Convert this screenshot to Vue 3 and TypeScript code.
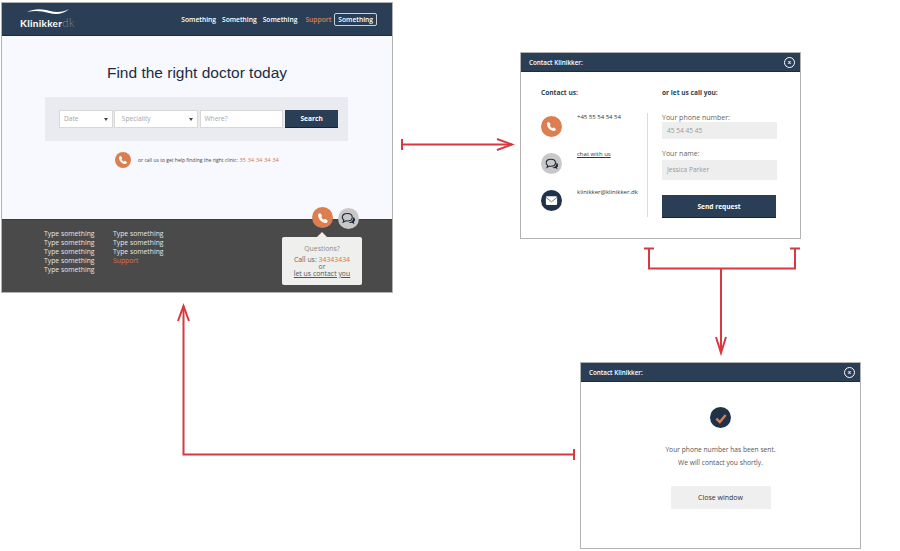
<template>
  <div class="canvas">
    <!-- main page -->
    <section class="frame page">
      <header class="topbar">
        <div class="logo">
          <svg class="swoosh" viewBox="0 0 44 7" width="44" height="7">
            <path d="M1 4 C9 0 17 1 24 3 C31 5 38 4 43 1 C38 6 30 7 23 5 C16 3 9 2 1 4 Z" fill="#fff" />
          </svg>
          <span class="logo-text">Klinikker<span class="logo-dk">dk</span></span>
        </div>
        <nav class="nav">
          <a v-for="(item, i) in navItems" :key="i">{{ item }}</a>
          <a class="nav-support">Support</a>
          <a class="nav-boxed">Something</a>
        </nav>
      </header>

      <main class="hero">
        <h1>Find the right doctor today</h1>
        <div class="search">
          <div class="field date">Date<span class="caret"></span></div>
          <div class="field speciality">Speciality<span class="caret"></span></div>
          <div class="field where">Where?</div>
          <button class="search-btn">Search</button>
        </div>
        <div class="call-line">
          <span class="circle orange small">
            <svg viewBox="0 0 24 24" width="10" height="10"><path :d="phonePath" fill="#fff" /></svg>
          </span>
          <span class="call-text">or call us to get help finding the right clinic: <em>35 34 34 34 34</em></span>
        </div>
      </main>

      <footer class="footer">
        <ul v-for="(col, i) in footerCols" :key="i" class="foot-col">
          <li v-for="(t, j) in col" :key="j" :class="{ support: t === 'Support' }">{{ t }}</li>
        </ul>
        <div class="floating">
          <span class="circle orange big">
            <svg viewBox="0 0 24 24" width="12" height="12"><path :d="phonePath" fill="#fff" /></svg>
          </span>
          <span class="circle grey big lower">
            <svg viewBox="0 0 24 24" width="15" height="15"><path :d="chatBack" fill="none" stroke="#1d2a38" stroke-width="1.8" /><path :d="chatFront" fill="#1d2a38" /></svg>
          </span>
        </div>
        <div class="tooltip">
          <div class="tip-title">Questions?</div>
          <div class="tip-call">Call us: <em>34343434</em></div>
          <div class="tip-or">or</div>
          <u class="tip-link">let us contact you</u>
        </div>
      </footer>
    </section>

    <!-- contact modal -->
    <section class="frame modal contact">
      <header class="modal-head">
        <span>Contact Klinikker:</span>
        <span class="close">x</span>
      </header>
      <div class="contact-body">
        <div class="contact-left">
          <h3>Contact us:</h3>
          <div class="contact-row">
            <span class="circle orange mid">
              <svg viewBox="0 0 24 24" width="11" height="11"><path :d="phonePath" fill="#fff" /></svg>
            </span>
            <span class="contact-text">+45 55 54 54 54</span>
          </div>
          <div class="contact-row">
            <span class="circle grey mid">
              <svg viewBox="0 0 24 24" width="14" height="14"><path :d="chatBack" fill="none" stroke="#1d2a38" stroke-width="1.8" /><path :d="chatFront" fill="#1d2a38" /></svg>
            </span>
            <u class="contact-text">chat with us</u>
          </div>
          <div class="contact-row">
            <span class="circle navy mid">
              <svg viewBox="0 0 24 24" width="15" height="15">
                <rect x="3" y="5" width="18" height="14" rx="2" fill="#fff" />
                <path d="M3 7 L12 14 L21 7" fill="none" stroke="#1f3247" stroke-width="1" />
              </svg>
            </span>
            <span class="contact-text mail">klinikker@klinikker.dk</span>
          </div>
        </div>
        <div class="contact-right">
          <h3>or let us call you:</h3>
          <div class="form">
            <label class="first">Your phone number:</label>
            <div class="input phone">45 54 45 45</div>
            <label>Your name:</label>
            <div class="input name">Jessica Parker</div>
            <button class="send-btn">Send request</button>
          </div>
        </div>
      </div>
    </section>

    <!-- confirmation modal -->
    <section class="frame modal sent">
      <header class="modal-head">
        <span>Contact Klinikker:</span>
        <span class="close">x</span>
      </header>
      <div class="sent-body">
        <span class="circle navy check">
          <svg viewBox="0 0 24 24" width="14" height="14"><path d="M4 13 L10 19 L20 7" fill="none" stroke="#dd7e50" stroke-width="4" /></svg>
        </span>
        <p>Your phone number has been sent.</p>
        <p>We will contact you shortly.</p>
        <button class="close-btn">Close window</button>
      </div>
    </section>

    <!-- flow arrows -->
    <svg class="arrows" viewBox="0 0 900 551" width="900" height="551">
      <g fill="none" stroke="#d8383f" stroke-width="2">
        <path d="M402 139 V150 M402 144.5 H512" />
        <path d="M497 139 L512 144.5 L497 150" />
        <path d="M644 248.5 H654 M649 248.5 V268.5 H795 V248.5 M790 248.5 H800" />
        <path d="M721 268.5 V353" />
        <path d="M716 337 L721 353 L726 337" />
        <path d="M574 449 V460 M574 454.5 H183.5 V306" />
        <path d="M178 321 L183.5 306 L189 321" />
      </g>
    </svg>
  </div>
</template>

<script setup lang="ts">
const navItems: string[] = ["Something", "Something", "Something"];

const footerCols: string[][] = [
  ["Type something", "Type something", "Type something", "Type something", "Type something"],
  ["Type something", "Type something", "Type something", "Support"],
];

const phonePath =
  "M6.6 2.5 L9.8 6.8 C10.3 7.5 10.1 8.3 9.5 8.9 L8.3 10 C9.3 12.3 11.6 14.7 14 15.7 L15.1 14.5 C15.7 13.9 16.5 13.7 17.2 14.2 L21.5 17.4 C21.9 18.8 20.1 21.6 18 21.8 C10 22 2 14 2.2 6 C2.4 3.9 5.2 2.1 6.6 2.5 Z";
// outlined bubble at the back, solid one lower right
const chatBack = "M10 4 C5 4 2 6.6 2 10 C2 11.8 3 13.4 4.5 14.5 L3.5 18 L7.8 15.7 C8.5 15.9 9.2 16 10 16 C15 16 18 13.4 18 10 C18 6.6 15 4 10 4 Z";
const chatFront = "M19.5 9.5 C21.5 10.7 22.5 12.3 22.5 14 C22.5 15.4 21.8 16.7 20.6 17.7 L21.5 21 L17.6 18.9 C15.8 19.3 13.8 19 12.3 18.2 C16.5 18.2 20 15 19.5 9.5 Z";
</script>

<style>
html,
body {
  margin: 0;
  background: #fff;
}
</style>

<style scoped>
.canvas {
  position: relative;
  width: 900px;
  height: 551px;
  overflow: hidden;
  background: #fff;
  font-family: "Open Sans", "Liberation Sans", sans-serif;
  color: #333;
}

.arrows {
  position: absolute;
  left: 0;
  top: 0;
  pointer-events: none;
}

.frame {
  position: absolute;
  box-sizing: border-box;
  border: 1px solid #b3b3b3;
  display: flex;
  flex-direction: column;
  background: #fff;
}

.circle {
  display: inline-flex;
  align-items: center;
  justify-content: center;
  border-radius: 50%;
  flex: none;
}
.orange { background: #dd7e50; }
.grey { background: #c8c8c8; }
.navy { background: #1f3247; }
.small { width: 16px; height: 16px; }
.mid { width: 21px; height: 21px; }
.big { width: 21px; height: 21px; }

/* main page */
.page {
  left: 1px;
  top: 2px;
  width: 392px;
  height: 291px;
}

.topbar {
  height: 33px;
  flex: none;
  box-sizing: border-box;
  background: #2a3f55;
  border-bottom: 1px solid #1c2c3f;
  display: flex;
  align-items: center;
  justify-content: space-between;
  padding: 0 15px 0 18px;
  color: #fff;
}

.logo {
  position: relative;
  width: 60px;
  padding-top: 7px;
}
.swoosh {
  position: absolute;
  left: 6px;
  top: -2px;
}
.logo-text {
  font-size: 10px;
  line-height: 12px;
  letter-spacing: 0.3px;
  display: block;
  white-space: nowrap;
  font-family: "Lato", sans-serif;
  font-weight: 700;
}
.logo-dk {
  color: #76889a;
  font-size: 11.5px;
  font-weight: 300;
  letter-spacing: 0.4px;
}

.nav {
  display: flex;
  align-items: center;
  font-size: 6.7px;
  font-weight: 600;
}
.nav a { margin-left: 6px; white-space: nowrap; }
.nav-support {
  color: #d6835a;
  margin-left: 8px !important;
}
.nav-boxed {
  border: 1px solid #c7d0d8;
  border-radius: 2px;
  padding: 0 3px;
  height: 11px;
  line-height: 11px;
  margin-left: 3px !important;
}

.hero {
  flex: 1;
  background: #f7f9ff;
  display: flex;
  flex-direction: column;
  align-items: center;
}
.hero h1 {
  margin: 27px 0 0;
  font-family: "Liberation Sans", Arial, sans-serif;
  font-weight: 400;
  font-size: 15.5px;
  line-height: 20px;
  color: #1d2c3f;
}
.search {
  margin: 14px 1px 0 0;
  width: 303px;
  height: 44px;
  box-sizing: border-box;
  background: #e9ebf0;
  display: flex;
  align-items: center;
  padding: 0 10px 0 14px;
  gap: 2px;
}
.field {
  box-sizing: border-box;
  height: 18px;
  line-height: 16px;
  background: #fff;
  border: 1px solid #d8d8d8;
  padding-left: 4px;
  font-size: 6.6px;
  color: #a6a6a6;
  position: relative;
}
.date { width: 54px; margin-right: -1px; }
.speciality { width: 84px; padding-left: 7px; }
.where { width: 84px; }
.caret {
  position: absolute;
  right: 4px;
  top: 7px;
  border-left: 2px solid transparent;
  border-right: 2px solid transparent;
  border-top: 3px solid #444;
}
.search-btn {
  width: 53px;
  height: 18px;
  border: none;
  border-bottom: 1px solid #15222f;
  background: #2a3f55;
  color: #fff;
  font-family: inherit;
  font-size: 6.6px;
  font-weight: 700;
  padding: 0;
}
.call-line {
  margin-top: 11px;
  display: flex;
  align-items: center;
  gap: 7px;
  font-size: 5px;
  color: #444;
}
.call-text em {
  font-style: normal;
  font-size: 5.9px;
  color: #d9764a;
}

.footer {
  position: relative;
  flex: none;
  height: 73px;
  box-sizing: border-box;
  background: #4a4a4a;
  border-top: 1px solid #3d3d3d;
  display: flex;
  align-items: flex-start;
  padding: 9px 0 0 42px;
  gap: 18px;
}
.foot-col {
  list-style: none;
  margin: 0;
  padding: 0;
  font-size: 6.8px;
  line-height: 9.1px;
  color: #e6e6e6;
  width: 51px;
  white-space: nowrap;
}
.support { color: #d6764a; }
.floating {
  position: absolute;
  left: 310px;
  top: -13px;
  display: flex;
  gap: 5px;
}
.lower { margin-top: 1px; }
.tooltip {
  position: absolute;
  left: 280px;
  top: 17px;
  width: 80px;
  height: 48px;
  box-sizing: border-box;
  background: #efefed;
  border-radius: 2px;
  text-align: center;
  color: #666;
  font-size: 6.9px;
  line-height: 7px;
  padding-top: 8px;
}
.tooltip::before {
  content: "";
  position: absolute;
  left: 35px;
  top: -5px;
  border-left: 5px solid transparent;
  border-right: 5px solid transparent;
  border-bottom: 5px solid #efefed;
}
.tip-title { color: #8a8a8a; margin-bottom: 4px; }
.tip-call em { font-style: normal; color: #d9764a; }
.tip-link { display: block; color: #555; }

/* modals */
.modal {
  width: 281px;
  height: 187px;
}
.contact { left: 520px; top: 52px; }
.sent { left: 580px; top: 362px; }

.modal-head {
  height: 19px;
  flex: none;
  box-sizing: border-box;
  background: #2a3f55;
  border-bottom: 1px solid #1c2c3f;
  color: #fff;
  font-size: 6.3px;
  font-weight: 600;
  display: flex;
  align-items: center;
  justify-content: space-between;
  padding: 0 5px 0 8px;
}
.close {
  width: 11px;
  height: 11px;
  box-sizing: border-box;
  border: 1px solid #fff;
  border-radius: 50%;
  font-size: 6px;
  line-height: 8px;
  text-align: center;
}

.contact-body {
  flex: 1;
  display: flex;
  color: #222f3e;
}
h3 {
  margin: 0;
  font-size: 6.6px;
  line-height: 10px;
  font-weight: 700;
  color: #2a3f55;
}
.contact-left {
  width: 126px;
  padding: 16px 0 0 20px;
  box-sizing: border-box;
}
.contact-row {
  display: flex;
  gap: 15px;
  align-items: flex-start;
  height: 37px;
}
.contact-row:nth-of-type(1) { margin-top: 18px; }
.contact-text {
  font-size: 6px;
  line-height: 8px;
  color: #333;
  margin-top: -3px;
  white-space: nowrap;
}
.mail { margin-top: -2px; }
.contact-right {
  flex: 1;
  padding: 16px 0 0 15px;
}
.form {
  margin-top: 18px;
  margin-left: -15px;
  padding-left: 14px;
  border-left: 1px solid #dcdcdc;
  height: 104px;
  width: 116px;
}
label {
  display: block;
  font-size: 7px;
  line-height: 10px;
  color: #666;
}
.first { margin-top: -3px; }
.input {
  width: 115px;
  box-sizing: border-box;
  background: #eeeeee;
  color: #9a9a9a;
  font-size: 6.6px;
  padding-left: 5px;
}
.phone { height: 17px; line-height: 17px; margin: -1px 0 10px; }
.name { height: 20px; line-height: 20px; margin: 1px 0 15px; }
.send-btn {
  display: block;
  width: 114px;
  height: 23px;
  border: none;
  border-bottom: 1px solid #15222f;
  background: #2a3f55;
  color: #fff;
  font-family: inherit;
  font-size: 6.6px;
  font-weight: 700;
  padding: 0;
}

.sent-body {
  flex: 1;
  display: flex;
  flex-direction: column;
  align-items: center;
  color: #555;
  font-size: 6.7px;
  padding-top: 25px;
}
.check { width: 21px; height: 21px; margin-bottom: 15px; }
.sent-body p {
  margin: 0;
  line-height: 13px;
}
.close-btn {
  margin-top: 17px;
  width: 100px;
  height: 23px;
  border: none;
  background: #efefef;
  color: #333;
  font-family: inherit;
  font-size: 7px;
  padding: 0;
}
</style>
